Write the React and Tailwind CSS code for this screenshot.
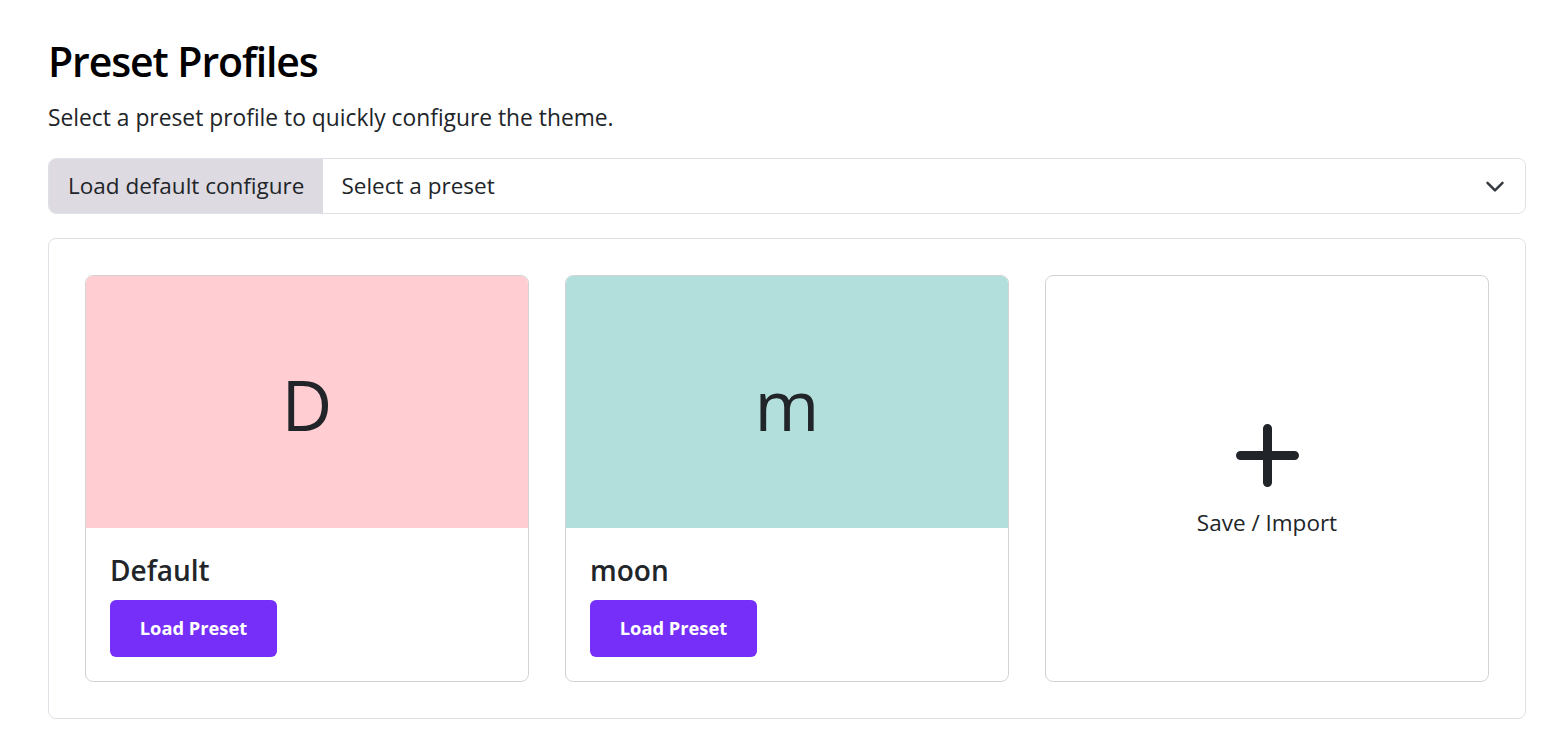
import React from "react";

function Card({ letter, name, bg }) {
  return (
    <div className="flex flex-col h-[407px] border border-[#d3d3d6] rounded-lg overflow-hidden bg-white">
      <div className={`h-[252px] flex items-center justify-center ${bg}`}>
        <span className="text-[70px] leading-none text-[#212529] mt-[4px]">{letter}</span>
      </div>
      <div className="flex-1 px-6 pt-[26px] pb-6">
        <div className="text-[28px] font-semibold leading-[1.2] text-[#212529] mb-[12px]">{name}</div>
        <button className="h-[57px] w-[167px] rounded-md bg-[#762ff9] text-white text-[18.3px] font-bold">
          Load Preset
        </button>
      </div>
    </div>
  );
}

export default function App() {
  return (
    <div className="pl-12 pr-[27px] pt-[37px] pb-6 bg-white text-[#212529] font-['Open_Sans',sans-serif]">
      <h1 className="text-[41px] font-semibold leading-[49px] tracking-[-1.1px] text-black mb-[15px]">Preset Profiles</h1>
      <p className="text-[22.8px] leading-[34px] mb-[23px]">Select a preset profile to quickly configure the theme.</p>
      <div className="flex h-[56px] border border-[#dee2e6] rounded-lg overflow-hidden">
        <div className="bg-[#dedae1] px-[19px] flex items-center text-[22.5px]">Load default configure</div>
        <div className="flex-1 flex items-center justify-between pl-[18px] pr-[20px] text-[22.5px]">
          <span>Select a preset</span>
          <svg width="20" height="20" viewBox="0 0 16 16" fill="none" stroke="#343a40" strokeWidth="2" strokeLinecap="round" strokeLinejoin="round">
            <path d="M2 5.5l6 6 6-6" />
          </svg>
        </div>
      </div>
      <div className="mt-[24px] border border-[#dee2e6] rounded-lg p-9 grid grid-cols-3 gap-9">
        <Card letter="D" name="Default" bg="bg-[#ffcdd2]" />
        <Card letter="m" name="moon" bg="bg-[#b2dfdb]" />
        <div className="h-[407px] border border-[#d3d3d6] rounded-lg flex flex-col items-center justify-center">
          <svg width="63" height="63" viewBox="0 0 63 63" className="mt-[6px]">
            <path d="M31.5 4.5v54M4.5 31.5h54" stroke="#212529" strokeWidth="9" strokeLinecap="round" />
          </svg>
          <div className="text-[22.5px] leading-[34px] mt-[19px]">Save / Import</div>
        </div>
      </div>
    </div>
  );
}
